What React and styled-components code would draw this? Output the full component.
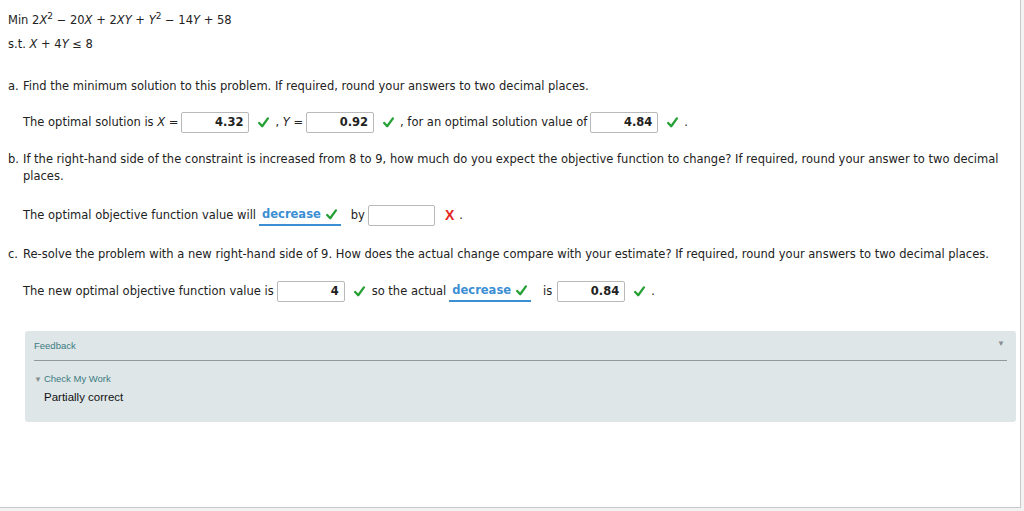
import React from 'react';
import styled, { createGlobalStyle } from 'styled-components';

const GlobalStyle = createGlobalStyle`
  html, body {
    margin: 0;
    padding: 0;
    background: #f2f2f2;
  }
  body {
    font-family: "DejaVu Sans", Verdana, sans-serif;
    font-size: 11.5px;
    color: #222;
  }
`;

const Frame = styled.div`
  width: 1021px;
  height: 508px;
  background: #fff;
  border-right: 1px solid #c8c8c8;
  border-bottom: 1px solid #c8c8c8;
  box-sizing: border-box;
  padding: 13px 0 0 8px;
`;

const Formula = styled.div`
  line-height: 14px;
  margin-bottom: ${p => p.$gap || 0}px;
  white-space: nowrap;
  sup {
    font-size: 9px;
    line-height: 0;
  }
  i {
    font-style: italic;
  }
`;

const Part = styled.div`
  display: flex;
  line-height: 17px;
  margin-top: ${p => p.$top || 0}px;
  padding-right: 20px;
`;

const PartLabel = styled.span`
  flex: 0 0 15px;
`;

const AnswerRow = styled.div`
  display: flex;
  align-items: center;
  height: 22px;
  margin-left: 15px;
  margin-top: ${p => p.$top || 0}px;
  white-space: nowrap;
`;

const Input = styled.span`
  display: inline-flex;
  align-items: center;
  justify-content: flex-end;
  box-sizing: border-box;
  width: ${p => p.$w || 68}px;
  height: 21px;
  margin: 0 ${p => p.$mr ?? 9}px 0 ${p => p.$ml ?? 3}px;
  padding-right: 5px;
  border: 1px solid #b9b9b9;
  border-radius: 2px;
  font-weight: bold;
  background: #fff;
`;

const CheckSvg = styled.svg`
  width: 11px;
  height: 11px;
  flex: none;
  margin-right: ${p => p.$mr ?? 6}px;
`;

const Check = ({ mr }) => (
  <CheckSvg $mr={mr} viewBox="0 0 11 11">
    <path d="M1.2 6 L4.2 9.2 L9.9 1.4" fill="none" stroke="#25a035" strokeWidth="2.3" strokeLinecap="round" strokeLinejoin="round" />
  </CheckSvg>
);

const Cross = styled.span`
  color: #e3261d;
  font-weight: bold;
  font-size: 14px;
  margin-right: 5px;
  font-family: "Liberation Sans", Arial, sans-serif;
`;

const Select = styled.span`
  display: inline-flex;
  align-items: center;
  height: 21px;
  margin: 0 ${p => p.$mr || 10}px 0 3px;
  padding: 0 4px 0 3px;
  border-bottom: 2px solid #3c8fd3;
  color: #3c8fd3;
  font-weight: bold;
  gap: 5px;
  box-sizing: border-box;
`;

const Feedback = styled.div`
  margin: 29px 0 0 17px;
  width: 991px;
  height: 91px;
  background: #dee6e8;
  border-radius: 3px;
  box-sizing: border-box;
  padding: 9px 9px 0 9px;
  font-family: "Liberation Sans", Arial, sans-serif;
`;

const FeedbackHead = styled.div`
  display: flex;
  justify-content: space-between;
  align-items: flex-start;
  height: 20px;
  border-bottom: 1px solid #8f9a9c;
  color: #3c7a80;
  font-size: 9.5px;
`;

const Caret = styled.span`
  color: #8a8f91;
  font-size: 8px;
  margin: -1px 2px 0 0;
`;

const Toggle = styled.div`
  margin-top: 12px;
  color: #3c7a80;
  font-size: 9.5px;
  span {
    color: #8a8f91;
    font-size: 8px;
    margin-right: 2px;
  }
`;

const Result = styled.div`
  margin: 7px 0 0 10px;
  font-size: 11.5px;
  color: #111;
`;

export default function App() {
  return (
    <>
      <GlobalStyle />
      <Frame>
        <Formula $gap={10}>
          Min 2<i>X</i><sup>2</sup> &minus; 20<i>X</i> + 2<i>XY</i> + <i>Y</i><sup>2</sup> &minus; 14<i>Y</i> + 58
        </Formula>
        <Formula>
          s.t. <i>X</i> + 4<i>Y</i> &le; 8
        </Formula>

        <Part $top={27}>
          <PartLabel>a.</PartLabel>
          <span>Find the minimum solution to this problem. If required, round your answers to two decimal places.</span>
        </Part>
        <AnswerRow $top={16}>
          The optimal solution is <i>&nbsp;X&nbsp;</i>=
          <Input>4.32</Input>
          <Check />, <i>&nbsp;Y&nbsp;</i>=
          <Input>0.92</Input>
          <Check />, for an optimal solution value of
          <Input>4.84</Input>
          <Check />.
        </AnswerRow>

        <Part $top={18}>
          <PartLabel>b.</PartLabel>
          <span>If the right-hand side of the constraint is increased from 8 to 9, how much do you expect the objective function to change? If required, round your answer to two decimal places.</span>
        </Part>
        <AnswerRow $top={19}>
          The optimal objective function value will
          <Select>decrease <Check mr={0} /></Select>
          by
          <Input $w={67} $mr={10}></Input>
          <Cross>X</Cross>.
        </AnswerRow>

        <Part $top={20}>
          <PartLabel>c.</PartLabel>
          <span>Re-solve the problem with a new right-hand side of 9. How does the actual change compare with your estimate? If required, round your answers to two decimal places.</span>
        </Part>
        <AnswerRow $top={17}>
          The new optimal objective function value is
          <Input>4</Input>
          <Check mr={7} />so the actual
          <Select $mr={12}>decrease <Check mr={0} /></Select>
          is
          <Input $ml={5}>0.84</Input>
          <Check />.
        </AnswerRow>

        <Feedback>
          <FeedbackHead>
            <span>Feedback</span>
            <Caret>▼</Caret>
          </FeedbackHead>
          <Toggle><span>▼</span>Check My Work</Toggle>
          <Result>Partially correct</Result>
        </Feedback>
      </Frame>
    </>
  );
}
